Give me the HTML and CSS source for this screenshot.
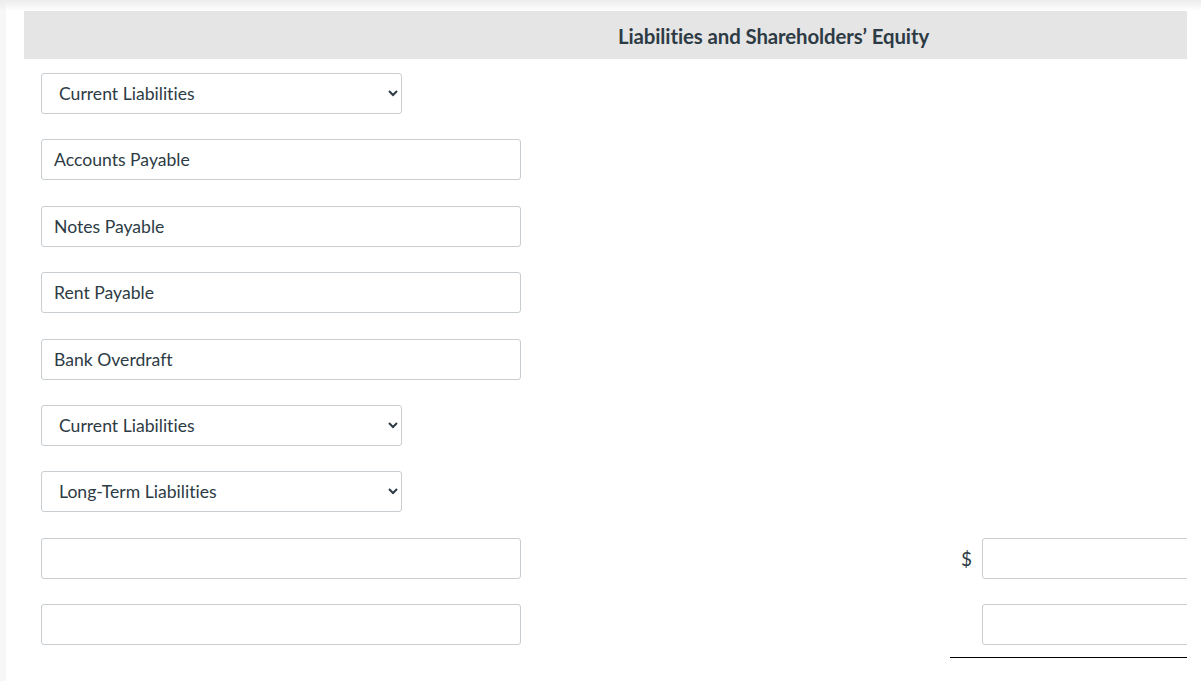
FILE: index.html
```html
<!DOCTYPE html>
<html lang="en">
<head>
<meta charset="utf-8">
<title>Liabilities and Shareholders' Equity</title>
<link rel="stylesheet" href="styles.css">
</head>
<body>
<div class="topshade"></div>
<div class="page">
  <div class="sheet">
    <div class="head"><span class="title">Liabilities and Shareholders’ Equity</span></div>
    <div class="rows">
      <div class="row">
        <select class="sel"><option>Current Liabilities</option></select>
      </div>
      <div class="row"><input class="txt" type="text" value="Accounts Payable"></div>
      <div class="row"><input class="txt" type="text" value="Notes Payable"></div>
      <div class="row"><input class="txt" type="text" value="Rent Payable"></div>
      <div class="row"><input class="txt" type="text" value="Bank Overdraft"></div>
      <div class="row">
        <select class="sel"><option>Current Liabilities</option></select>
      </div>
      <div class="row">
        <select class="sel"><option>Long-Term Liabilities</option></select>
      </div>
      <div class="row">
        <input class="txt" type="text" value="">
        <div class="amt">
          <span class="cur">$</span>
          <input class="num" type="text" value="">
        </div>
      </div>
      <div class="row">
        <input class="txt" type="text" value="">
        <div class="amt total">
          <span class="cur"></span>
          <input class="num" type="text" value="">
        </div>
      </div>
    </div>
  </div>
</div>
</body>
</html>
```

FILE: styles.css
```css
html, body {
  margin: 0;
  padding: 0;
  background: #ffffff;
}
body {
  font-family: Lato, "Open Sans", sans-serif;
  font-variant-ligatures: none;
  color: #2d3b45;
  height: 681px;
  overflow: hidden;
  position: relative;
}
.topshade {
  position: absolute;
  left: 0;
  top: 0;
  width: 100%;
  height: 11px;
  background: linear-gradient(#ececec, rgba(255,255,255,0));
  pointer-events: none;
}
.page {
  border-left: 6px solid #f7f7f7;
  padding: 11px 0 0 18px;
  height: 670px;
}
.sheet {
  width: 1163px;
  overflow: hidden;
}
.head {
  background: #e5e5e5;
  height: 48px;
  line-height: 51px;
  padding-left: 594px;
}
.title {
  font-weight: 700;
  font-size: 20.4px;
  color: #2d3b45;
  letter-spacing: -0.1px;
}
.rows {
  padding: 14px 0 0 17px;
}
.row {
  display: flex;
  align-items: flex-start;
  height: 66.375px;
}
.sel, .txt, .num {
  box-sizing: border-box;
  height: 41px;
  border: 1px solid #c7cdd1;
  border-radius: 3px;
  background-color: #ffffff;
  font-family: Lato, "Open Sans", sans-serif;
  font-variant-ligatures: none;
  font-size: 17.6px;
  color: #2d3b45;
  margin: 0;
  outline: none;
}
.sel {
  width: 361px;
  padding: 0 0 0 13px;
}
.txt {
  width: 480px;
  padding: 0 12px;
}
.amt {
  margin-left: auto;
  width: 237px;
  display: flex;
  align-items: flex-start;
  flex-shrink: 0;
}
.cur {
  width: 32px;
  flex-shrink: 0;
  box-sizing: border-box;
  padding-left: 11px;
  font-size: 19px;
  line-height: 41px;
  height: 41px;
  color: #2d3b45;
}
.num {
  width: 240px;
  flex-shrink: 0;
  padding: 0 10px;
}
.total {
  border-bottom: 1px solid #000000;
  padding-bottom: 12px;
}
```
